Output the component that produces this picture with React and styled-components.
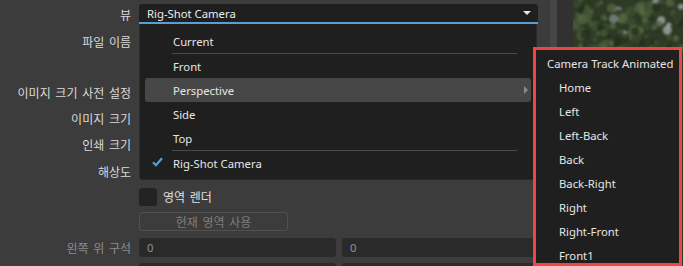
import React from 'react';
import styled, { createGlobalStyle } from 'styled-components';

const Global = createGlobalStyle`
  html, body { margin: 0; padding: 0; background: #3c3c3c; }
  body { font-family: "Noto Sans", "Noto Sans CJK KR", sans-serif; -webkit-font-smoothing: antialiased; }
`;

const Page = styled.div`
  position: relative;
  display: flex;
  width: 683px;
  height: 266px;
  overflow: hidden;
  background: #3c3c3c;
`;

const Panel = styled.div`
  width: 550px;
  flex: none;
  display: flex;
  flex-direction: column;
`;

const Strip = styled.div`
  flex: none;
  width: ${p => p.$w}px;
  background: ${p => p.$bg};
`;

const Viewport = styled.div`
  flex: 1;
  overflow: hidden;
  background: #2b3a22;
  svg { display: block; }
`;

const Row = styled.div`
  display: grid;
  grid-template-columns: 131px 399px;
  column-gap: 8px;
  align-items: center;
  height: ${p => p.$h}px;
  flex: none;
`;

const Label = styled.div`
  text-align: right;
  font-family: "Noto Sans CJK KR", "Noto Sans", sans-serif;
  font-size: 12px;
  word-spacing: 2px;
  color: ${p => (p.$dim ? '#8c8c8c' : '#dadada')};
  white-space: nowrap;
`;

const Field = styled.div`
  position: relative;
  height: 18px;
  background: #1f1f1f;
  border-radius: 3px 3px 0 0;
  border-bottom: 2px solid #5a9fd0;
  display: flex;
  align-items: center;
  justify-content: space-between;
  padding: 0 6px 0 8px;
  color: #ececec;
  font-size: 11.3px;
`;

const DownArrow = styled.span`
  width: 0;
  height: 0;
  border-left: 4px solid transparent;
  border-right: 4px solid transparent;
  border-top: 4px solid #e6e6e6;
  margin-right: 1px;
`;

const Menu = styled.div`
  position: absolute;
  left: 0;
  top: 20px;
  width: 398px;
  height: 156px;
  box-sizing: border-box;
  background: #1f1f1f;
  border: 1px solid #2a2a2a;
  border-top: none;
  border-radius: 0 0 4px 4px;
  padding: 5px 5px 0 5px;
  z-index: 5;
`;

const Item = styled.div`
  position: relative;
  height: 24px;
  display: flex;
  align-items: center;
  padding-left: ${p => p.$indent}px;
  border-radius: 3px;
  background: ${p => (p.$active ? '#474747' : 'transparent')};
  color: #e6e6e6;
  font-size: 11.3px;
  white-space: nowrap;
`;

const Sep = styled.div`
  height: 1px;
  background: #4a4a4a;
  margin: 0 14px 0 27px;
`;

const SubArrow = styled.span`
  position: absolute;
  right: 3px;
  top: 8px;
  width: 0;
  height: 0;
  border-top: 4px solid transparent;
  border-bottom: 4px solid transparent;
  border-left: 4px solid #8a8a8a;
`;

const Check = styled.svg`
  position: absolute;
  left: 7px;
  top: 6px;
`;

const SubMenu = styled.div`
  position: absolute;
  left: 533px;
  top: 47px;
  width: 149px;
  height: 219px;
  box-sizing: border-box;
  background: #1f1f1f;
  border: 3px solid #f04545;
  padding-top: 1px;
  overflow: hidden;
  z-index: 6;
`;

const CheckRow = styled.div`
  display: flex;
  align-items: center;
  gap: 6px;
  color: #e0e0e0;
  font-family: "Noto Sans CJK KR", "Noto Sans", sans-serif;
  font-size: 12px;
  word-spacing: 2px;
`;

const Box = styled.span`
  width: 18px;
  height: 18px;
  border-radius: 3px;
  background: #232323;
  flex: none;
`;

const GhostButton = styled.div`
  width: 149px;
  height: 19px;
  box-sizing: border-box;
  border: 1px solid #505050;
  border-radius: 3px;
  display: flex;
  align-items: center;
  justify-content: center;
  color: #7e7e7e;
  font-family: "Noto Sans CJK KR", "Noto Sans", sans-serif;
  font-size: 12px;
  word-spacing: 2px;
`;

const Pair = styled.div`
  display: grid;
  grid-template-columns: 197px 196px;
  column-gap: 6px;
  align-self: ${p => (p.$top ? 'start' : 'center')};
  margin-top: ${p => (p.$top ? 3 : 0)}px;
`;

const NumInput = styled.div`
  height: 19px;
  border-radius: 3px;
  background: #2a2a2a;
  display: flex;
  align-items: center;
  padding-left: 8px;
  color: #8b9099;
  font-size: 11.3px;
`;

const mainItems = [
  { t: 'Current' },
  { sep: true },
  { t: 'Front' },
  { t: 'Perspective', active: true, sub: true },
  { t: 'Side' },
  { t: 'Top' },
  { sep: true },
  { t: 'Rig-Shot Camera', checked: true },
];

const subItems = ['Home', 'Left', 'Left-Back', 'Back', 'Back-Right', 'Right', 'Right-Front', 'Front1'];

function Trees() {
  let s = 11;
  const rnd = () => {
    s = (s * 9301 + 49297) % 233280;
    return s / 233280;
  };
  const cols = ['#1f2a18', '#2a3820', '#34452a', '#3f5330', '#4b5f3a', '#5a6c46', '#8a9a98', '#b0bcc0'];
  const blobs = [];
  for (let i = 0; i < 180; i++) {
    const x = rnd() * 110;
    const y = rnd() * 60;
    const r = 1.5 + rnd() * 4;
    let c = Math.floor(rnd() * 6);
    if (y < 35 && x > 40 && rnd() > 0.9) c = 6 + Math.floor(rnd() * 2);
    blobs.push(<circle key={i} cx={x} cy={y} r={r} fill={cols[c]} opacity={0.7} />);
  }
  return (
    <svg width="110" height="266" viewBox="0 0 110 266">
      <defs>
        <filter id="soft" x="-10%" y="-10%" width="120%" height="120%">
          <feGaussianBlur stdDeviation="1.1" />
        </filter>
      </defs>
      <rect width="110" height="266" fill="#2e3a25" />
      <g filter="url(#soft)">{blobs}</g>
    </svg>
  );
}

export default function App() {
  return (
    <Page>
      <Global />
      <Panel>
        <Row $h={28}>
          <Label>뷰</Label>
          <Field>
            Rig-Shot Camera
            <DownArrow />
            <Menu>
              {mainItems.map((m, i) =>
                m.sep ? (
                  <Sep key={i} />
                ) : (
                  <Item key={i} $indent={28} $active={m.active}>
                    {m.checked && (
                      <Check width="11" height="10" viewBox="0 0 11 10">
                        <path d="M1 5.2 L4 8.2 L10 1.2" stroke="#4ba3e3" strokeWidth="2.2" fill="none" />
                      </Check>
                    )}
                    {m.t}
                    {m.sub && <SubArrow />}
                  </Item>
                )
              )}
            </Menu>
          </Field>
        </Row>
        <Row $h={27}>
          <Label>파일 이름</Label>
          <div />
        </Row>
        <Row $h={25}>
          <Label />
          <div />
        </Row>
        <Row $h={25}>
          <Label>이미지 크기 사전 설정</Label>
          <div />
        </Row>
        <Row $h={26}>
          <Label>이미지 크기</Label>
          <div />
        </Row>
        <Row $h={27}>
          <Label>인쇄 크기</Label>
          <div />
        </Row>
        <Row $h={26}>
          <Label>해상도</Label>
          <div />
        </Row>
        <Row $h={25}>
          <Label />
          <CheckRow>
            <Box />
            영역 렌더
          </CheckRow>
        </Row>
        <Row $h={25}>
          <Label />
          <GhostButton>현재 영역 사용</GhostButton>
        </Row>
        <Row $h={26}>
          <Label $dim>왼쪽 위 구석</Label>
          <Pair>
            <NumInput>0</NumInput>
            <NumInput>0</NumInput>
          </Pair>
        </Row>
        <Row $h={26}>
          <Label />
          <Pair $top>
            <NumInput />
            <NumInput />
          </Pair>
        </Row>
      </Panel>
      <Strip $w={7} $bg="#464646" />
      <Strip $w={16} $bg="#313131" />
      <Viewport>
        <Trees />
      </Viewport>
      <SubMenu>
        <Item $indent={11}>Camera Track Animated</Item>
        {subItems.map(t => (
          <Item key={t} $indent={23}>
            {t}
          </Item>
        ))}
      </SubMenu>
    </Page>
  );
}
